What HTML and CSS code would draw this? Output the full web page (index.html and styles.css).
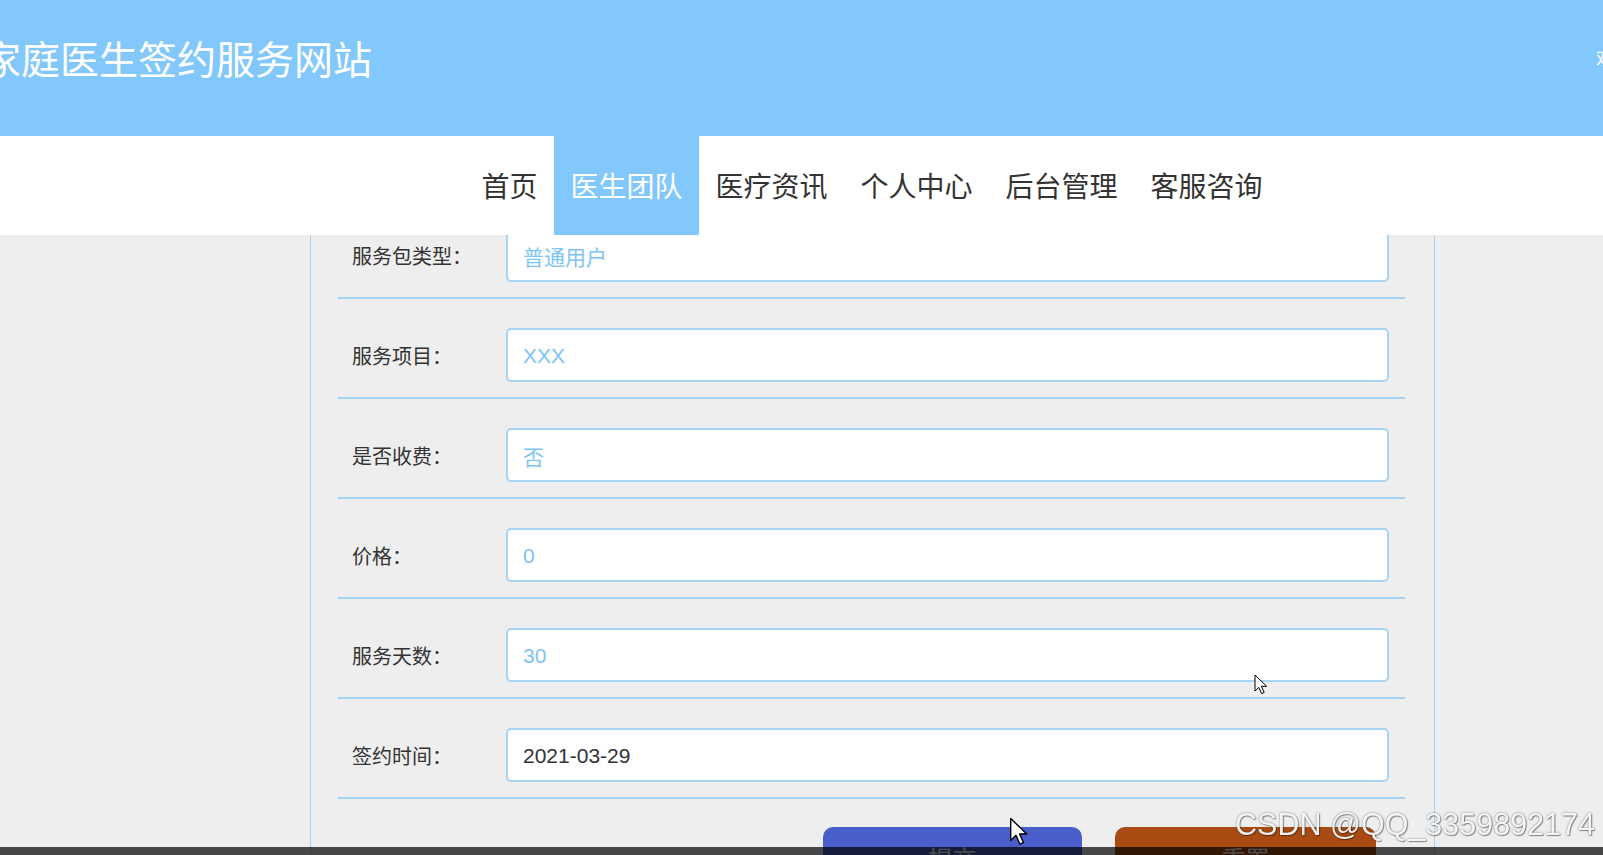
FILE: index.html
```html
<!DOCTYPE html>
<html lang="zh-CN">
<head>
<meta charset="utf-8">
<title>家庭医生签约服务网站</title>
<link rel="stylesheet" href="styles.css">
</head>
<body>
<header class="top">
  <h1 class="site-title">家庭医生签约服务网站</h1>
  <div class="top-user">欢迎您</div>
</header>
<nav class="nav">
  <a class="nav-item">首页</a>
  <a class="nav-item active">医生团队</a>
  <a class="nav-item">医疗资讯</a>
  <a class="nav-item">个人中心</a>
  <a class="nav-item">后台管理</a>
  <a class="nav-item">客服咨询</a>
</nav>
<main class="viewport">
  <div class="card">
    <form class="form">
      <div class="row"><label class="label">服务包类型：</label><input class="field" value="普通用户" readonly></div>
      <div class="row"><label class="label">服务项目：</label><input class="field" value="XXX" readonly></div>
      <div class="row"><label class="label">是否收费：</label><input class="field" value="否" readonly></div>
      <div class="row"><label class="label">价格：</label><input class="field" value="0" readonly></div>
      <div class="row"><label class="label">服务天数：</label><input class="field" value="30" readonly></div>
      <div class="row"><label class="label">签约时间：</label><input class="field dark" value="2021-03-29" readonly></div>
      <div class="actions">
        <button type="button" class="btn btn-submit">提交</button>
        <button type="button" class="btn btn-reset">重置</button>
      </div>
    </form>
  </div>
</main>
<div class="player-bar"></div>
<div class="watermark">CSDN @QQ_3359892174</div>
<svg class="cursor cursor-a" width="14" height="21" viewBox="0 0 14 21"><path d="M1 1 L1 17 L4.8 13.3 L7.6 19.6 L10.2 18.5 L7.4 12.3 L12.6 12.3 Z" fill="#fff" stroke="#000" stroke-width="1" stroke-linejoin="round"/></svg>
<svg class="cursor cursor-b" width="20" height="29" viewBox="0 0 14 21"><path d="M1 1 L1 17 L4.8 13.3 L7.6 19.6 L10.2 18.5 L7.4 12.3 L12.6 12.3 Z" fill="#fff" stroke="#000" stroke-width="1" stroke-linejoin="round"/></svg>
</body>
</html>
```
FILE: styles.css
```css
html, body {
  margin: 0;
  padding: 0;
  height: 100%;
  overflow: hidden;
  background: #eeeeee;
  font-family: "Noto Sans CJK SC", "Noto Sans", sans-serif;
}

.top {
  height: 136px;
  background: #83c8fc;
  display: flex;
  justify-content: space-between;
  overflow: hidden;
}

.site-title {
  flex: 0 0 auto;
  margin: 37px 0 0 -18px;
  font-size: 39px;
  line-height: 40px;
  font-weight: 400;
  color: #fff;
  white-space: nowrap;
}

.top-user {
  flex: 0 0 7px;
  width: 7px;
  min-width: 0;
  margin-top: 47px;
  font-size: 18px;
  line-height: 20px;
  color: #fff;
  white-space: nowrap;
}

.nav {
  height: 99px;
  background: #fff;
  display: flex;
  padding-left: 465px;
}

.nav-item {
  padding: 0 16.5px;
  font-size: 28px;
  line-height: 99px;
  color: #333;
  white-space: nowrap;
}

.nav-item.active {
  background: #83c8fc;
  color: #fff;
}

.viewport {
  height: 620px;
  overflow: hidden;
}

.card {
  margin: -36px 0 0 310px;
  width: 1067px;
  padding: 0 29px 0 27px;
  border-left: 1px solid #a3d3f5;
  border-right: 1px solid #a3d3f5;
  min-height: 1000px;
}

.row {
  display: flex;
  align-items: center;
  padding: 29px 0 15px;
  border-bottom: 2px solid #a3d3f5;
}

.label {
  width: 168px;
  box-sizing: border-box;
  padding-left: 14px;
  font-size: 20px;
  color: #333;
  white-space: nowrap;
}

.field {
  width: 883px;
  height: 54px;
  box-sizing: border-box;
  margin: 0;
  border: 2px solid #a8d5f5;
  border-radius: 5px;
  padding: 1px 15px 0;
  background: #fff;
  font-family: "Liberation Sans", "Noto Sans CJK SC", sans-serif;
  font-size: 21px;
  color: #7ec4f3;
  outline: none;
}

.field.dark {
  color: #333;
}

.actions {
  display: flex;
  gap: 33px;
  padding: 28px 0 0 485px;
}

.btn {
  height: 60px;
  border: none;
  border-radius: 10px;
  font-family: "Noto Sans CJK SC", sans-serif;
  font-size: 24px;
  color: #fff;
}

.btn-submit {
  width: 259px;
  background: #4a5ecb;
}

.btn-reset {
  width: 261px;
  background: #a94b13;
}

.player-bar {
  position: fixed;
  left: 0;
  right: 0;
  bottom: 0;
  height: 8px;
  background: rgba(0, 0, 0, 0.7);
}

.watermark {
  position: fixed;
  right: 8px;
  bottom: 14px;
  font-family: "Liberation Sans", sans-serif;
  font-size: 30.5px;
  line-height: 34px;
  color: rgba(255, 255, 255, 0.92);
  text-shadow: 0 0 2px rgba(0, 0, 0, 0.55), 1px 1px 1px rgba(0, 0, 0, 0.35);
  white-space: nowrap;
}

.cursor {
  position: fixed;
}

.cursor-a {
  left: 1254px;
  top: 674px;
}

.cursor-b {
  left: 1009px;
  top: 817px;
}
```
